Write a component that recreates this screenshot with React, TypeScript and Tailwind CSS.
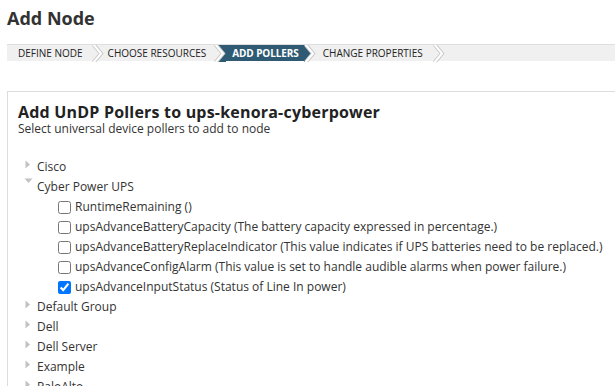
import React from "react";

const DARK = "#2e5b73";

function Sep({ mode }: { mode: "none" | "left" | "right" }) {
  return (
    <svg width="12" height="17" viewBox="0 0 12 17" className="block shrink-0">
      {mode === "right" && <polygon points="2,0 9.5,8.5 2,17 12,17 12,0" fill={DARK} />}
      {mode === "left" && <polygon points="0,0 2,0 9.5,8.5 2,17 0,17" fill={DARK} />}
      <polyline points="1.5,-0.5 9,8.5 1.5,17.5" fill="none" stroke="#c9c9c9" strokeWidth="4" />
      <polyline points="1.5,-0.5 9,8.5 1.5,17.5" fill="none" stroke="#ffffff" strokeWidth="2" />
    </svg>
  );
}

function TriRight() {
  return (
    <svg width="6" height="9" viewBox="0 0 6 9" className="block">
      <polygon points="0.5,0.5 5,4.5 0.5,8.5" fill="#c2c2c2" />
    </svg>
  );
}
function TriDown() {
  return (
    <svg width="9" height="6" viewBox="0 0 9 6" className="block">
      <polygon points="0.5,0.5 8.5,0.5 4.5,5" fill="#c2c2c2" />
    </svg>
  );
}

function Group({ label, open }: { label: string; open?: boolean }) {
  return (
    <div className="flex items-center h-[20px]">
      <div className="w-[29px] flex justify-start pl-[17px]">{open ? <span className="-ml-[1px] -mt-[9px]"><TriDown /></span> : <span className="-mt-[6px]"><TriRight /></span>}</div>
      <span>{label}</span>
    </div>
  );
}

function Item({ label, checked }: { label: string; checked?: boolean }) {
  return (
    <div className="flex items-center h-[20px] pl-[50px]">
      <input type="checkbox" checked={!!checked} readOnly className="w-[13px] h-[13px] m-0 mr-[4px]" />
      <span>{label}</span>
    </div>
  );
}

export default function App() {
  return (
    <div className="w-[615px] h-[386px] overflow-hidden bg-white text-[#333]" style={{ fontFamily: '"Open Sans", sans-serif' }}>
      <div className="pl-[7px] pt-[4px]">
        <h1 className="text-[18px] font-bold leading-[28px] text-[#333]">Add Node</h1>
      </div>
      <div className="mt-[12px] ml-[7px] flex h-[17px] bg-[#f0f0f0] border-t border-[#dedede] text-[10px] leading-[16px] text-[#222] uppercase">
        <div className="pl-[11px] pr-[9px]">Define Node</div>
        <Sep mode="none" />
        <div className="pl-[4px] pr-[8px]">Choose Resources</div>
        <Sep mode="right" />
        <div className="pl-[6px] pr-[5px] bg-[#2e5b73] text-white font-bold tracking-[-0.1px]">Add Pollers</div>
        <Sep mode="left" />
        <div className="pl-[7px] pr-[10px]">Change Properties</div>
        <Sep mode="none" />
      </div>
      <div className="mt-[30px] ml-[7px] border-l border-t border-[#dcdcdc] h-[400px] pl-[10px] pt-[10px]">
        <div className="text-[16px] font-bold leading-[20px] text-[#222] tracking-[0.2px]">Add UnDP Pollers to ups-kenora-cyberpower</div>
        <div className="text-[12px] leading-[14px] text-[#333]">Select universal device pollers to add to node</div>
        <div className="mt-[21px] text-[12px] -ml-[10px]">
          <Group label="Cisco" />
          <Group label="Cyber Power UPS" open />
          <Item label="RuntimeRemaining ()" />
          <Item label="upsAdvanceBatteryCapacity (The battery capacity expressed in percentage.)" />
          <Item label="upsAdvanceBatteryReplaceIndicator (This value indicates if UPS batteries need to be replaced.)" />
          <Item label="upsAdvanceConfigAlarm (This value is set to handle audible alarms when power failure.)" />
          <Item label="upsAdvanceInputStatus (Status of Line In power)" checked />
          <Group label="Default Group" />
          <Group label="Dell" />
          <Group label="Dell Server" />
          <Group label="Example" />
          <Group label="PaloAlto" />
        </div>
      </div>
    </div>
  );
}
